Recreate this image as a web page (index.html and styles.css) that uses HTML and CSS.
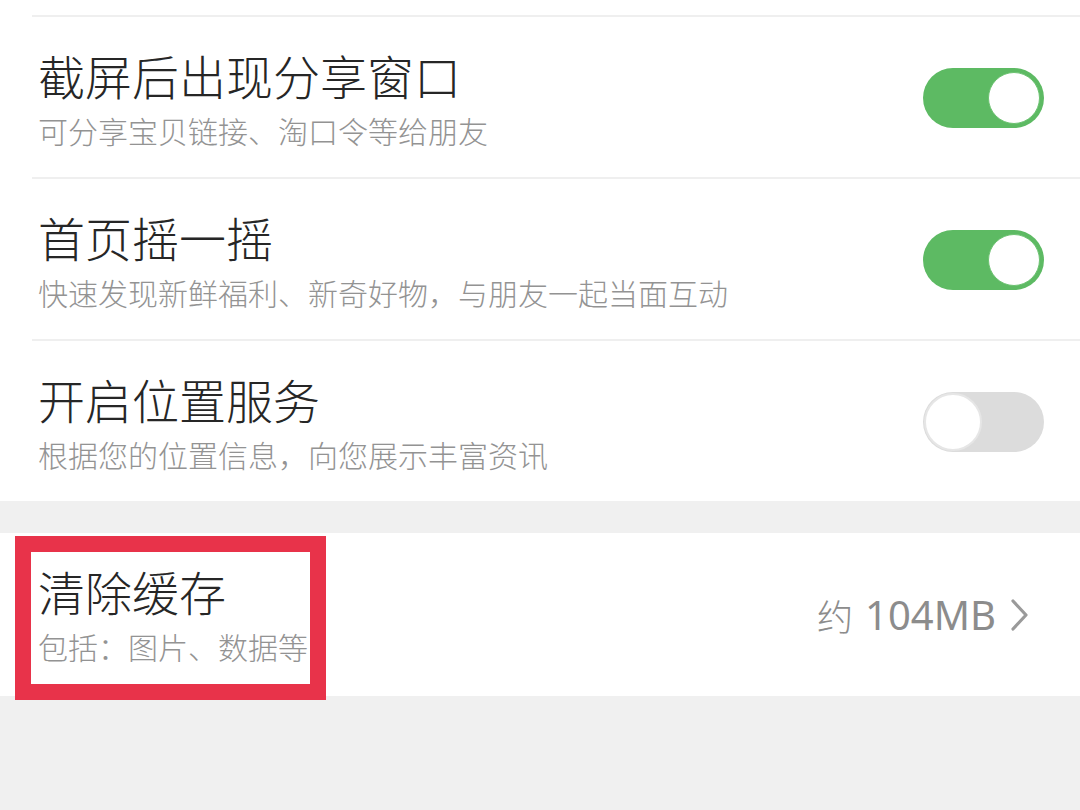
FILE: index.html
```html
<!DOCTYPE html>
<html lang="zh-CN">
<head>
<meta charset="UTF-8" />
<title>设置</title>
<link rel="stylesheet" href="styles.css">
</head>
<body>

<div class="group top">
  <div class="row">
    <div class="text">
      <div class="title">截屏后出现分享窗口</div>
      <div class="sub">可分享宝贝链接、淘口令等给朋友</div>
    </div>
    <div class="switch on"><span class="knob"></span></div>
  </div>

  <div class="row">
    <div class="text">
      <div class="title">首页摇一摇</div>
      <div class="sub">快速发现新鲜福利、新奇好物，与朋友一起当面互动</div>
    </div>
    <div class="switch on"><span class="knob"></span></div>
  </div>

  <div class="row">
    <div class="text">
      <div class="title">开启位置服务</div>
      <div class="sub">根据您的位置信息，向您展示丰富资讯</div>
    </div>
    <div class="switch"><span class="knob"></span></div>
  </div>
</div>

<div class="group">
  <div class="row cache">
    <div class="text">
      <div class="title">清除缓存</div>
      <div class="sub">包括：图片、数据等</div>
    </div>
    <div class="value">
      <span class="approx">约</span> 104MB
      <svg class="arrow" width="20" height="34" viewBox="0 0 20 34">
        <polyline points="3,3 16,17 3,31" fill="none" stroke="#9a9a9a" stroke-width="3.2" stroke-linecap="round" stroke-linejoin="round"/>
      </svg>
    </div>
    <!-- marque rouge -->
    <div class="mark"></div>
  </div>
</div>

</body>
</html>
```

FILE: styles.css
```css
body {
  margin: 0;
  background: #f0f0f0;
  font-family: "Noto Sans CJK SC", "Noto Sans", sans-serif;
  height: 810px;
  overflow: hidden;
}
.group {
  background: #fff;
  margin-bottom: 32px;
}
.group.top {
  padding-top: 15px;
}
.row {
  display: flex;
  align-items: center;
  margin-left: 32px;
  padding: 26px 36px 24px 6px;
  height: 110px;
  border-top: 2px solid #efefef;
  position: relative;
}
.text {
  flex: 1;
}
.title {
  font-size: 47px;
  line-height: 56px;
  font-weight: 300;
  color: #262626;
}
.sub {
  font-size: 30px;
  line-height: 40px;
  font-weight: 300;
  color: #939393;
  margin-top: 7px;
}
.switch {
  width: 121px;
  height: 60px;
  border-radius: 30px;
  background: #dcdcdc;
  position: relative;
}
.switch .knob {
  position: absolute;
  left: 1px;
  top: 1px;
  width: 54px;
  height: 54px;
  border-radius: 50%;
  background: #fff;
  border: 2px solid #e6e6e6;
}
.switch.on {
  background: #5dba63;
}
.switch.on .knob {
  left: auto;
  right: 4px;
  top: 4px;
  width: 50px;
  height: 50px;
  border: 1px solid #6cc271;
}
.cache {
  border-top: none;
  margin-left: 0;
  padding: 26px 50px 26px 38px;
  height: 111px;
}
.value {
  display: flex;
  align-items: center;
  gap: 14px;
  font-family: "Noto Sans", "Noto Sans CJK SC", sans-serif;
  font-size: 40px;
  color: #8c8c8c;
}
.approx {
  font-family: "Noto Sans CJK SC", sans-serif;
  font-size: 36px;
  font-weight: 300;
  margin-right: -2px;
}
.mark {
  position: absolute;
  left: 15px;
  top: 3px;
  width: 279px;
  height: 132px;
  border: 16px solid #e8334a;
}
```
